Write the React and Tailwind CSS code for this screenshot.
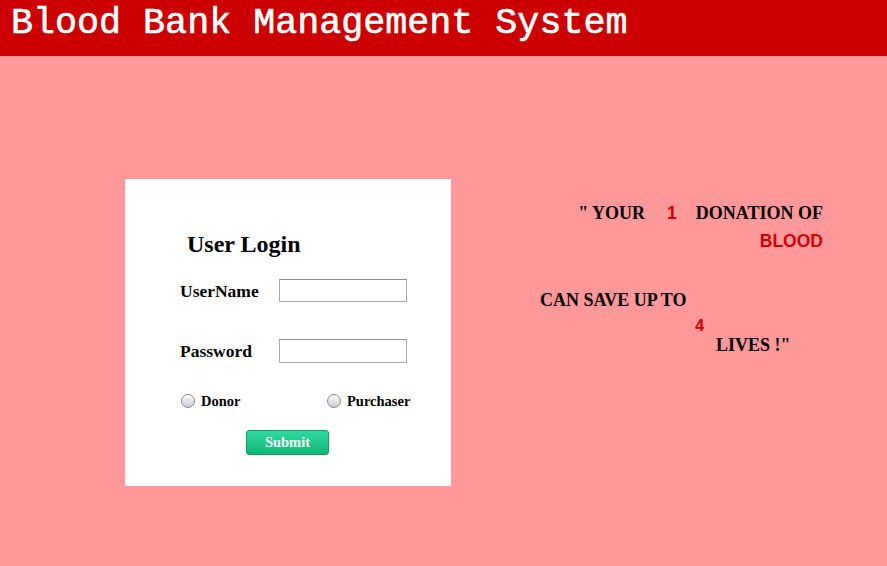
export default function App() {
  const serif = { fontFamily: '"Liberation Serif", "Times New Roman", serif' };
  const sans = { fontFamily: '"Liberation Sans", Arial, sans-serif' };
  return (
    <div className="w-[887px] h-[566px] bg-[#ff9999] overflow-hidden" style={serif}>
      <div className="h-[56px] bg-[#cc0000] pl-[11px] pt-[3px]">
        <div
          className="text-white text-[36.7px] font-normal leading-[40px] [-webkit-text-stroke:0.6px_white]"
          style={{ fontFamily: '"Liberation Mono", "Courier New", monospace' }}
        >
          Blood Bank Management System
        </div>
      </div>
      <div className="flex pt-[123px]">
        <div className="ml-[125px] w-[326px] h-[307px] bg-white flex flex-col">
          <div className="mt-[53px] pl-[62px] h-[24px] leading-[24px] text-[24px] font-bold text-black">
            User Login
          </div>
          <div className="mt-[23px] flex items-center h-[23px]">
            <div className="pl-[55px] w-[154px] text-[17.5px] font-bold leading-[20px]">UserName</div>
            <div className="w-[128px] h-[23px] border border-[#a9a9a9] border-t-[#8e8e8e] bg-white" />
          </div>
          <div className="mt-[37px] flex items-center h-[24px]">
            <div className="pl-[55px] w-[154px] text-[17.5px] font-bold leading-[20px]">Password</div>
            <div className="w-[128px] h-[24px] border border-[#a9a9a9] border-t-[#8e8e8e] bg-white" />
          </div>
          <div className="mt-[30px] flex items-center h-[16px] text-[14.5px] font-bold">
            <span className="ml-[56px] w-[14px] h-[14px] rounded-full border border-[#8a8a8a] bg-gradient-to-b from-[#fdfdfd] to-[#c9ccd3]" />
            <span className="ml-[6px] w-[38px] leading-[16px]">Donor</span>
            <span className="ml-[88px] w-[14px] h-[14px] rounded-full border border-[#8a8a8a] bg-gradient-to-b from-[#fdfdfd] to-[#c9ccd3]" />
            <span className="ml-[6px] leading-[16px]">Purchaser</span>
          </div>
          <div className="mt-[21px] flex">
            <div className="ml-[121px] w-[83px] h-[25px] rounded-[3px] border border-[#139a68] bg-gradient-to-b from-[#2fd9a0] to-[#10b678] flex items-center justify-center text-white text-[14.5px] font-bold">
              Submit
            </div>
          </div>
        </div>
        <div className="ml-[89px] w-[283px] text-[18px] font-bold text-black">
          <div className="mt-[24px] h-[20px] leading-[20px] flex justify-end items-baseline">
            <span>" YOUR</span>
            <span className="ml-[22px] text-[#cc0000] text-[17.5px]" style={sans}>1</span>
            <span className="ml-[19px]">DONATION OF</span>
          </div>
          <div className="mt-[8px] h-[20px] leading-[20px] text-right text-[#cc0000] text-[17.5px]" style={sans}>
            BLOOD
          </div>
          <div className="mt-[39px] h-[20px] leading-[20px]">CAN SAVE UP TO</div>
          <div className="mt-[5px] h-[20px] leading-[20px] pl-[155px] text-[#cc0000] text-[16.5px]" style={sans}>
            4
          </div>
          <div className="h-[20px] leading-[20px] pl-[176px]">LIVES !"</div>
        </div>
      </div>
    </div>
  );
}
